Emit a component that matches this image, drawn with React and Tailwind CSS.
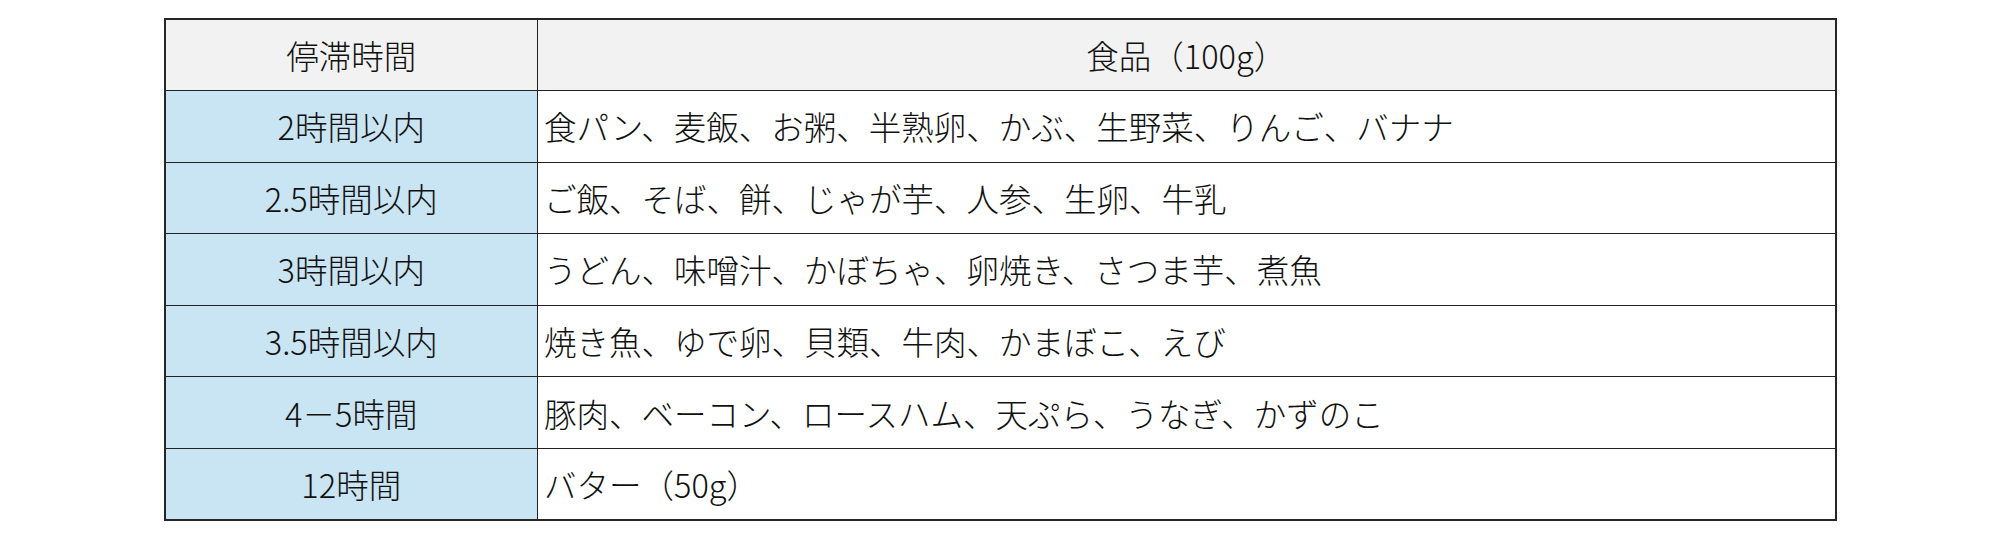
import React from 'react';

const rows = [
  { time: '2時間以内', foods: '食パン、麦飯、お粥、半熟卵、かぶ、生野菜、りんご、バナナ' },
  { time: '2.5時間以内', foods: 'ご飯、そば、餅、じゃが芋、人参、生卵、牛乳' },
  { time: '3時間以内', foods: 'うどん、味噌汁、かぼちゃ、卵焼き、さつま芋、煮魚' },
  { time: '3.5時間以内', foods: '焼き魚、ゆで卵、貝類、牛肉、かまぼこ、えび' },
  { time: '4－5時間', foods: '豚肉、ベーコン、ロースハム、天ぷら、うなぎ、かずのこ' },
  { time: '12時間', foods: 'バター（50g）' },
];

export default function App() {
  return (
    <div
      className="w-[2000px] h-[540px] bg-white pt-[18px]"
      style={{ fontFamily: '"Noto Sans CJK JP", "Noto Sans", sans-serif' }}
    >
      <table className="mx-auto w-[1673px] border-collapse border-2 border-[#262626] text-[32.5px] font-light leading-none text-[#111] table-fixed">
        <colgroup>
          <col className="w-[373px]" />
          <col />
        </colgroup>
        <thead>
          <tr className="h-[71.6px] bg-[#f2f2f2]">
            <th className="border border-[#222] font-light text-center">停滞時間</th>
            <th className="border border-[#222] font-light text-center">食品（100g）</th>
          </tr>
        </thead>
        <tbody>
          {rows.map((r) => (
            <tr key={r.time} className="h-[71.6px]">
              <td className="border border-[#222] bg-[#c9e4f2] text-center">{r.time}</td>
              <td className="border border-[#222] bg-white pl-[6px] text-left whitespace-nowrap">{r.foods}</td>
            </tr>
          ))}
        </tbody>
      </table>
    </div>
  );
}
